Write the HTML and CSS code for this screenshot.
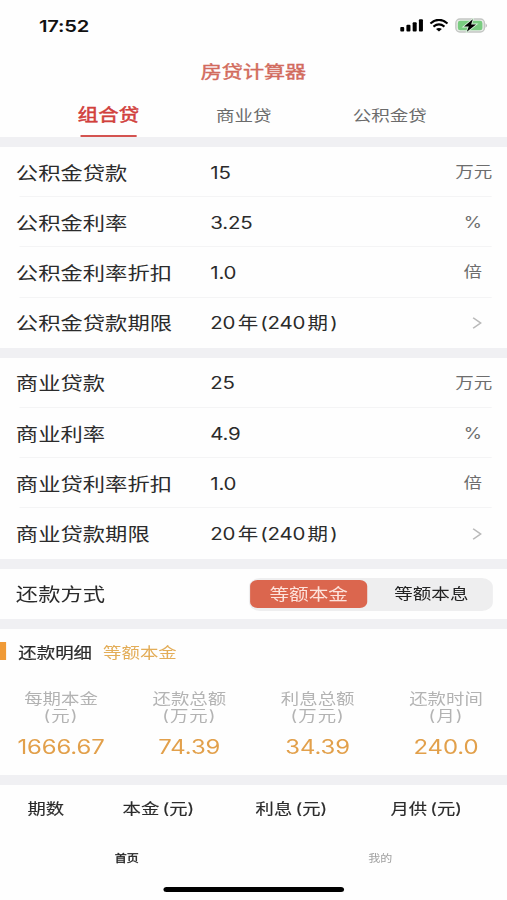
FILE: index.html
```html
<!DOCTYPE html>
<html lang="zh-CN">
<head>
<meta charset="utf-8">
<title>房贷计算器</title>
<link rel="stylesheet" href="styles.css">
</head>
<body>
<div class="screen">
  <header class="status">
    <span class="time">17:52</span>
    <div class="status-icons">
      <svg class="signal" viewBox="0 0 23 13" preserveAspectRatio="none"><rect x="0" y="8" width="4" height="4.5" rx="1"/><rect x="6.2" y="5.8" width="4" height="6.7" rx="1"/><rect x="12.4" y="3.2" width="4" height="9.3" rx="1"/><rect x="18.6" y="0.3" width="4" height="12.2" rx="1"/></svg>
      <svg class="wifi" viewBox="0 0 20 13" preserveAspectRatio="none"><path d="M1 4.5Q10 -2.8 19 4.5M4.2 7.6Q10 3.2 15.8 7.6" fill="none" stroke="#000" stroke-width="2.2"/><path d="M6.9 10.1Q10 7.8 13.1 10.1L10 12.6Z"/></svg>
      <svg class="battery" viewBox="0 0 33 15" preserveAspectRatio="none"><rect x="0.8" y="1" width="28.6" height="13" rx="4" fill="#e9ece9" stroke="#c3c6c3" stroke-width="1.4"/><rect x="2.8" y="2.8" width="24.6" height="9.4" rx="2.3" fill="#79cc80"/><path d="M30.6 5.2Q33 7.5 30.6 9.8Z" fill="#aaa"/><path d="M17.8 1.2L9 8.6H13.7L11.8 13.8L21 6.4H16.1Z" stroke="#d9f1db" stroke-width="1.8" paint-order="stroke"/></svg>
    </div>
  </header>
  <h1 class="title">房贷计算器</h1>
  <nav class="tabs">
    <span class="tab tab-active">组合贷</span>
    <span class="tab tab-mid">商业贷</span>
    <span class="tab tab-last">公积金贷</span>
  </nav>
  <section class="group">
    <div class="row"><span class="label">公积金贷款</span><span class="value">15</span><span class="unit unit-wide">万元</span></div>
    <div class="row"><span class="label">公积金利率</span><span class="value">3.25</span><span class="unit percent">%</span></div>
    <div class="row"><span class="label">公积金利率折扣</span><span class="value">1.0</span><span class="unit">倍</span></div>
    <div class="row"><span class="label">公积金贷款期限</span><span class="value">20<i>年</i>(240<i>期</i>)</span><svg class="chevron" viewBox="0 0 8 12"><path d="M0.8 0.8L7 6L0.8 11.2"/></svg></div>
  </section>
  <section class="group">
    <div class="row"><span class="label">商业贷款</span><span class="value">25</span><span class="unit unit-wide">万元</span></div>
    <div class="row"><span class="label">商业利率</span><span class="value">4.9</span><span class="unit percent">%</span></div>
    <div class="row"><span class="label">商业贷利率折扣</span><span class="value">1.0</span><span class="unit">倍</span></div>
    <div class="row"><span class="label">商业贷款期限</span><span class="value">20<i>年</i>(240<i>期</i>)</span><svg class="chevron" viewBox="0 0 8 12"><path d="M0.8 0.8L7 6L0.8 11.2"/></svg></div>
  </section>
  <section class="group method">
    <span class="label">还款方式</span>
    <div class="segment"><span class="seg seg-on">等额本金</span><span class="seg">等额本息</span></div>
  </section>
  <section class="group details">
    <div class="details-head"><span class="mark"></span><span class="head-text">还款明细</span><span class="head-type">等额本金</span></div>
    <div class="stats">
      <div class="stat"><span>每期本金</span><span class="paren">(元)</span><strong>1666.67</strong></div>
      <div class="stat"><span>还款总额</span><span class="paren">(万元)</span><strong>74.39</strong></div>
      <div class="stat"><span>利息总额</span><span class="paren">(万元)</span><strong>34.39</strong></div>
      <div class="stat"><span>还款时间</span><span class="paren">(月)</span><strong>240.0</strong></div>
    </div>
  </section>
  <section class="group table-head">
    <span>期数</span><span>本金 (元)</span><span>利息 (元)</span><span>月供 (元)</span>
  </section>
  <footer class="tabbar"><span class="bar-on">首页</span><span>我的</span></footer>
  <div class="home"></div>
</div>
</body>
</html>
```
FILE: styles.css
```css
* { box-sizing: border-box; }
html, body { margin: 0; width: 507px; height: 900px; overflow: hidden; background: #fff; }

/* The whole screen is laid out at 415.6px and widened to 507px. */
.screen {
  width: 415.57px;
  height: 900px;
  transform: scaleX(1.22);
  transform-origin: 0 0;
  display: flex;
  flex-direction: column;
  background: #fefefe;
  color: #2b2b2b;
  font-family: Inter, "Noto Sans CJK SC", sans-serif;
  white-space: nowrap;
}
.status { height: 51px; display: flex; justify-content: space-between; padding: 0 16px 0 32px; align-items: center; flex: none; }
.time { font-size: 16.5px; font-weight: 600; color: #111; letter-spacing: -0.15px; }
.status-icons { display: flex; align-items: center; gap: 5px; }
.signal { width: 19px; height: 13px; }
.wifi { width: 15.6px; height: 13px; }
.battery { width: 27px; height: 15px; }

.title { margin: 0; height: 40px; line-height: 41px; text-align: center; font-size: 17.3px; font-weight: 400; -webkit-text-stroke: 0.4px #d26b5d; color: #d26b5d; flex: none; }
.tabs { height: 46px; display: flex; padding-left: 64px; flex: none; }
.tab { font-size: 15.2px; line-height: 50px; color: #6b6b6b; }
.tab-active { width: 50px; font-size: 16.8px; -webkit-text-stroke: 0.5px #d1403c; color: #d1403c; display: flex; flex-direction: column; align-items: center; line-height: 48px; height: 46px; }
.tab-active::after { content: ""; flex: none; width: 46px; height: 2.5px; margin-top: -4.5px; background: #d45350; }
.tab-mid { margin-left: 63px; }
.tab-last { margin-left: 66.6px; }

.group { border-top: 10px solid #f0f0f3; flex: none; }
.row { height: 50.2px; display: flex; align-items: center; padding: 1px 12px 0 13px; background: linear-gradient(#f4f4f5, #f4f4f5) 16px 100% / 387px 1px no-repeat; }
.row:last-child { background: none; }
.label { width: 159px; font-size: 18.3px; line-height: 24px; }
.value { flex: 1; font-size: 16.8px; line-height: 24px; letter-spacing: -0.2px; padding-left: 0.4px; }
.value i { font-style: normal; margin: 0 2px; }
.unit { font-size: 15.2px; line-height: 22px; color: #6d6d6d; margin: -1px 8.5px 0 0; }
.percent { margin-top: 1px; }
.unit-wide { margin-right: 0; }
.chevron { width: 8px; height: 12px; margin-right: 8.5px; fill: none; stroke: #b9b9b9; stroke-width: 1.4; }

.method { height: 60px; display: flex; align-items: center; padding: 1px 11.5px 0 13px; }
.method .label { flex: 1; }
.segment { width: 200px; height: 33px; border-radius: 9px; background: #eeeeef; display: flex; align-items: center; padding: 0 1px; }
.seg { flex: 1; text-align: center; font-size: 15.2px; line-height: 30px; color: #222; padding-left: 3px; }
.seg-on { flex: none; width: 96px; font-size: 16.1px; line-height: 28px; height: 28.5px; padding: 0; border-radius: 6px; background: #db664e; color: #fde3dc; }

.details { height: 156px; }
.details-head { display: flex; align-items: center; height: 45px; font-size: 15.1px; }
.mark { width: 5px; height: 18px; background: #f09a36; margin-right: 10px; }
.head-text { width: 69.5px; -webkit-text-stroke: 0.2px #2b2b2b; }
.head-type { color: #e3ad58; }
.stats { display: grid; grid-template-columns: repeat(4, 105.2px); justify-content: center; padding-top: 16px; }
.stat { display: flex; flex-direction: column; align-items: center; font-size: 15.1px; line-height: 17.5px; color: #b3b3b3; }
.paren { letter-spacing: 0.8px; }
.stat strong { font-size: 19.6px; font-weight: 400; line-height: 24px; letter-spacing: -0.1px; margin-top: 10.5px; color: #e2a04b; }

.table-head { height: 56px; display: grid; grid-template-columns: 78px 109px 110.5px 1fr; padding-left: 22.5px; align-items: center; font-size: 15px; -webkit-text-stroke: 0.15px #2b2b2b; word-spacing: -1.5px; }
.tabbar { height: 55.5px; display: grid; grid-template-columns: 1fr 1fr; text-align: center; font-size: 9.9px; line-height: 55px; color: #a0a0a0; flex: none; }
.bar-on { color: #222; -webkit-text-stroke: 0.35px #222; }
.home { width: 148.5px; height: 5px; margin: 1px auto 0; border-radius: 3px; background: #000; flex: none; }
```
